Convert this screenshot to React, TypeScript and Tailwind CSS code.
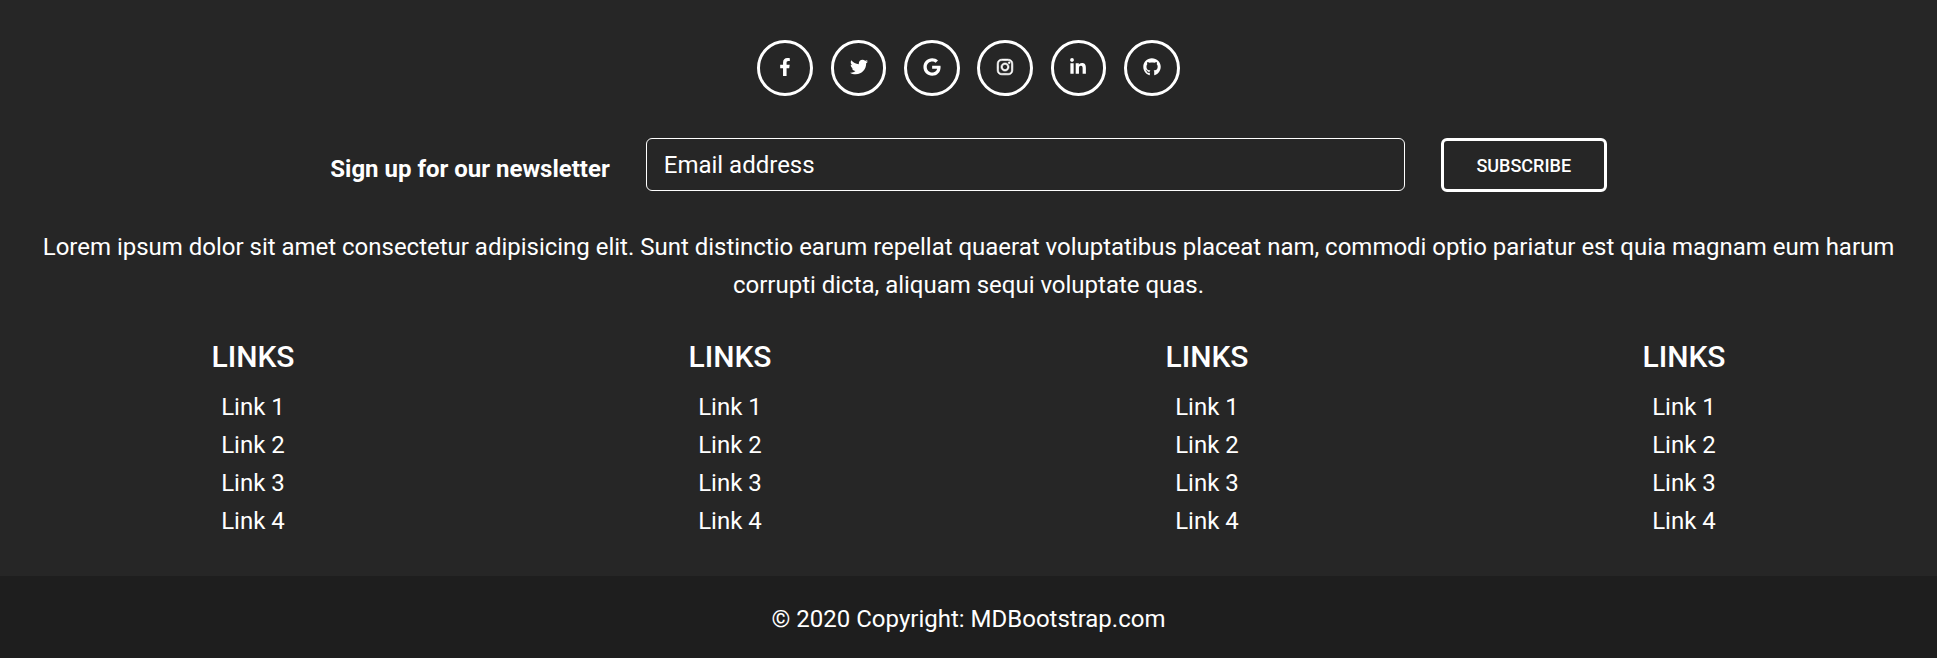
import React from "react";
import { FaFacebookF, FaTwitter, FaGoogle, FaInstagram, FaLinkedinIn, FaGithub } from "react-icons/fa";

const socials = [
  { name: "Facebook", Icon: FaFacebookF, className: "" },
  { name: "Twitter", Icon: FaTwitter, className: "" },
  { name: "Google", Icon: FaGoogle, className: "" },
  { name: "Instagram", Icon: FaInstagram, className: "overflow-visible stroke-white stroke-[18px]" },
  { name: "LinkedIn", Icon: FaLinkedinIn, className: "" },
  { name: "GitHub", Icon: FaGithub, className: "" },
];

const columns = [1, 2, 3, 4];
const links = ["Link 1", "Link 2", "Link 3", "Link 4"];

export default function App() {
  return (
    <footer className="flex h-[658px] flex-col overflow-hidden bg-[#262626] text-center font-[Roboto,sans-serif] text-[24px] leading-[38px] text-white">
      <div className="h-[576px] shrink-0 px-[14.5px] pt-10">
        <section className="flex justify-center gap-[17.6px]">
          {socials.map(({ name, Icon, className }) => (
            <a
              key={name}
              href="#!"
              aria-label={name}
              className="flex h-14 w-[55.7px] items-center justify-center rounded-full border-[3px] border-white pb-[2px] text-[18px]"
            >
              <Icon className={className} />
            </a>
          ))}
        </section>

        <form className="mt-[42px] flex justify-center" onSubmit={(e) => e.preventDefault()}>
          <p className="px-[18px] pt-3 font-bold">Sign up for our newsletter</p>
          <div className="w-5/12 px-[18px]">
            <input
              type="email"
              placeholder="Email address"
              className="block h-[53px] w-full rounded-md border border-white bg-transparent px-[17px] outline-none placeholder:text-white placeholder:opacity-100"
            />
          </div>
          <div className="px-[18px]">
            <button className="block h-[54px] w-[166px] rounded-md border-[3px] border-white pt-[2px] text-[18px] font-medium leading-6">
              SUBSCRIBE
            </button>
          </div>
        </form>

        <p className="mx-[18px] mt-9 tracking-[-0.012px]">
          Lorem ipsum dolor sit amet consectetur adipisicing elit. Sunt distinctio earum repellat quaerat
          voluptatibus placeat nam, commodi optio pariatur est quia magnam eum harum corrupti dicta, aliquam
          sequi voluptate quas.
        </p>

        <section className="mt-[35px] grid grid-cols-4">
          {columns.map((column) => (
            <div key={column}>
              <h5 className="mb-[13px] text-[30px] font-medium leading-9">LINKS</h5>
              <ul>
                {links.map((link) => (
                  <li key={link}>
                    <a href="#!">{link}</a>
                  </li>
                ))}
              </ul>
            </div>
          ))}
        </section>
      </div>

      <div className="flex-1 bg-[#1e1e1e] pt-6">
        © 2020 Copyright: <a href="#!">MDBootstrap.com</a>
      </div>
    </footer>
  );
}
